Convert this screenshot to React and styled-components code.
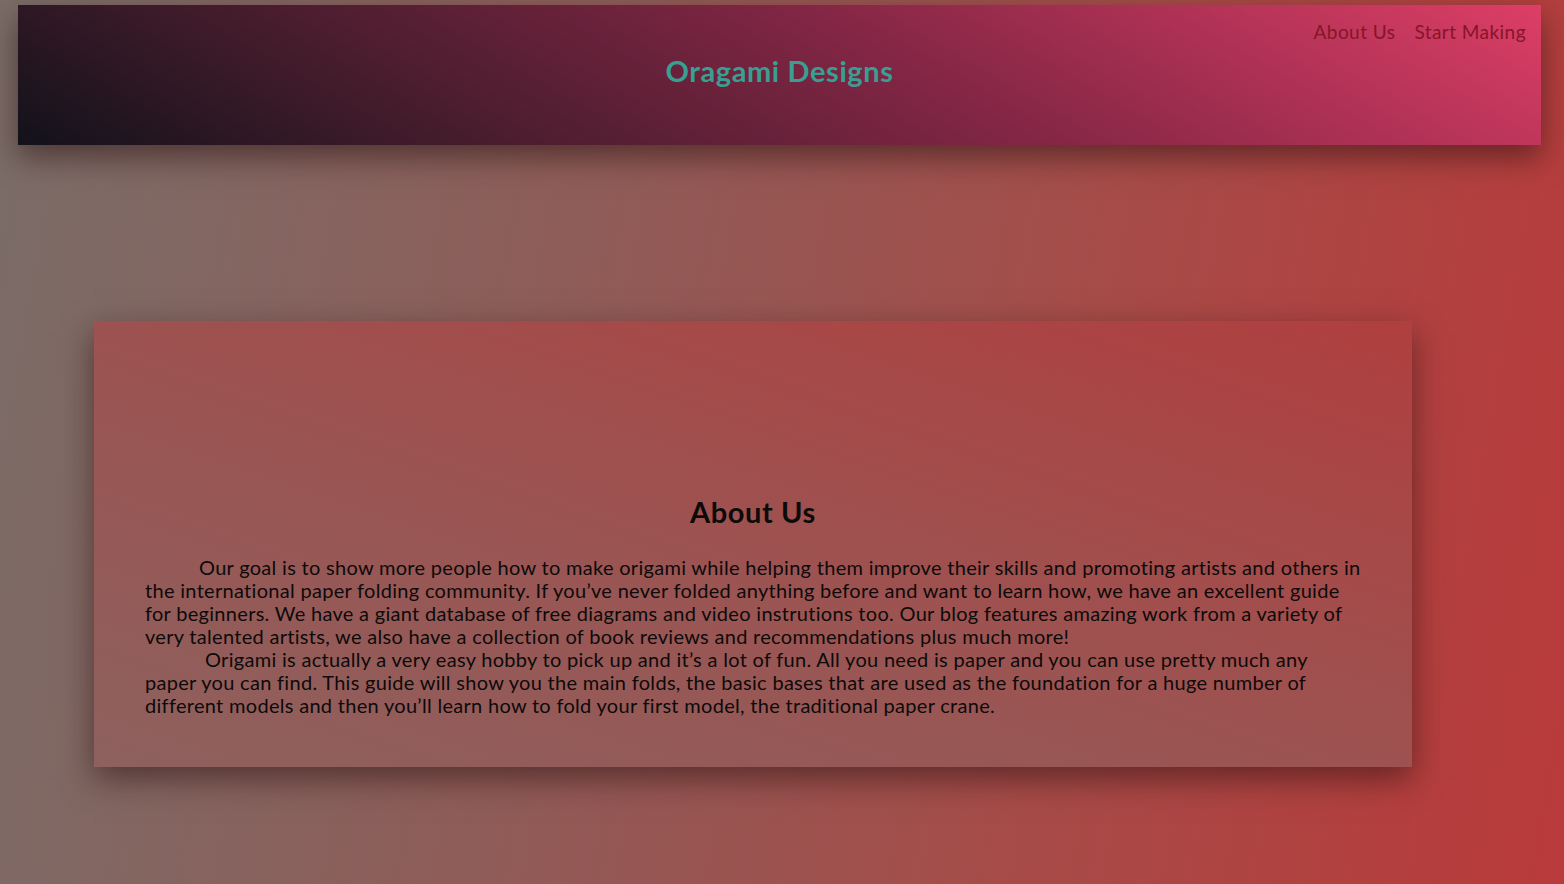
import React from 'react';
import styled, { createGlobalStyle } from 'styled-components';

const GlobalStyle = createGlobalStyle`
    html, body {
        margin: 0;
        padding: 0;
        min-height: 100%;
    }
    body {
        font-family: 'Lato', 'DejaVu Sans', sans-serif;
        background: linear-gradient(100deg, #7a6d68 0%, #8e5d59 35%, #a84a47 70%, #b93a3a 100%);
        min-height: 884px;
    }
`;

const Page = styled.div`
    min-height: 884px;
    padding-top: 5px;
    box-sizing: border-box;
`;

const Header = styled.header`
    position: relative;
    margin: 0 23px 0 18px;
    height: 140px;
    background: linear-gradient(30deg, #12121a 0%, #4a1d2e 28%, #832645 58%, #dd3e66 100%);
    box-shadow: 0 12px 28px rgba(40, 15, 15, 0.55);
    display: flex;
    justify-content: center;
`;

const Brand = styled.h1`
    margin: 0;
    padding-top: 48px;
    font-size: 29px;
    font-weight: 700;
    letter-spacing: 0.6px;
    color: #3a9f93;
`;

const Nav = styled.nav`
    position: absolute;
    top: 15px;
    right: 15px;
    display: flex;
    gap: 19px;
`;

const NavLink = styled.a`
    font-size: 19px;
    letter-spacing: 0.45px;
    color: #86152a;
    text-decoration: none;
`;

const Card = styled.section`
    margin: 176px 152px 0 94px;
    padding: 173px 51px 50px;
    background: linear-gradient(to top right, #8d615e 0%, #9b5452 45%, #b03f3f 100%);
    box-shadow: 0 12px 30px rgba(40, 15, 15, 0.55);
`;

const CardTitle = styled.h2`
    margin: 0 0 27px;
    text-align: center;
    font-size: 29px;
    font-weight: 700;
    letter-spacing: 0.6px;
    color: #0d0a0a;
`;

const Paragraph = styled.p`
    margin: 0;
    font-size: 20px;
    line-height: 23px;
    letter-spacing: 0.3px;
    color: #0d0a0a;
    text-indent: ${props => props.indent}px;
`;

const App = () => {
    return (
        <>
            <GlobalStyle />
            <Page>
                <Header>
                    <Brand>Oragami Designs</Brand>
                    <Nav>
                        <NavLink href="#about">About Us</NavLink>
                        <NavLink href="#start">Start Making</NavLink>
                    </Nav>
                </Header>
                <Card id="about">
                    <CardTitle>About Us</CardTitle>
                    <Paragraph indent={54}>
                        Our goal is to show more people how to make origami while helping them improve their skills and promoting artists and others in the international paper folding community. If you’ve never folded anything before and want to learn how, we have an excellent guide for beginners. We have a giant database of free diagrams and video instrutions too. Our blog features amazing work from a variety of very talented artists, we also have a collection of book reviews and recommendations plus much more!
                    </Paragraph>
                    <Paragraph indent={60}>
                        Origami is actually a very easy hobby to pick up and it’s a lot of fun. All you need is paper and you can use pretty much any paper you can find. This guide will show you the main folds, the basic bases that are used as the foundation for a huge number of different models and then you’ll learn how to fold your first model, the traditional paper crane.
                    </Paragraph>
                </Card>
            </Page>
        </>
    );
};

export default App;
